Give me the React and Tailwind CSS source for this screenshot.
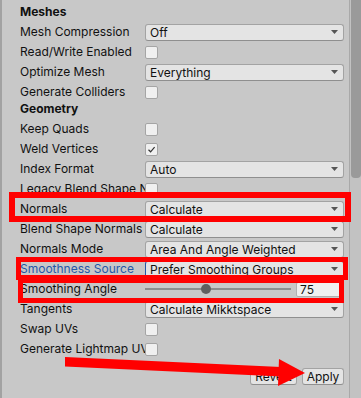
import React from 'react';

const Caret = () => (
  <svg width="7" height="4" viewBox="0 0 7 4" className="shrink-0">
    <path d="M0 0 H7 L3.5 4 Z" fill="#555" />
  </svg>
);

const Dropdown = ({ value, accent }) => (
  <div
    className={`flex-1 h-[17px] flex items-center justify-between pl-[4px] pr-[5px] rounded-[3px] border border-[#a3a3a3] border-b-[#8f8f8f] bg-[#e4e4e4] ${
      accent ? 'border-l-[#2457a8]' : ''
    }`}
  >
    <span className="leading-[15px] whitespace-nowrap">{value}</span>
    <Caret />
  </div>
);

const Checkbox = ({ checked }) => (
  <div className="w-[13px] h-[13px] rounded-[2px] border border-[#a5a5a5] bg-[#f0f0f0] flex items-center justify-center">
    {checked && (
      <svg width="9" height="9" viewBox="0 0 9 9">
        <path d="M1.5 4.8 L3.6 6.8 L7.6 2.2" fill="none" stroke="#333" strokeWidth="1.2" />
      </svg>
    )}
  </div>
);

const Row = ({ label, blue, children }) => (
  <div className="flex items-center h-5">
    <div
      className={`w-[125px] pr-[2px] overflow-hidden whitespace-nowrap leading-[16px] ${
        blue ? 'text-[#2457a8]' : ''
      }`}
    >
      {label}
    </div>
    {children}
  </div>
);

const Header = ({ title }) => (
  <div className="h-[17px] font-bold leading-[14px]">{title}</div>
);

const App = () => {
  return (
    <div className="relative w-[361px] h-[398px] overflow-hidden flex bg-[#c8c8c8] text-[12px] text-[#111] font-['Inter',sans-serif]">
      <div className="w-[2px] bg-[#a2a2a2]" />

      <div className="flex-1 pl-[18px] pr-[5px] pt-[5px] flex flex-col">
        <Header title="Meshes" />
        <Row label="Mesh Compression"><Dropdown value="Off" /></Row>
        <Row label="Read/Write Enabled"><Checkbox /></Row>
        <Row label="Optimize Mesh"><Dropdown value="Everything" /></Row>
        <Row label="Generate Colliders"><Checkbox /></Row>
        <Header title="Geometry" />
        <Row label="Keep Quads"><Checkbox /></Row>
        <Row label="Weld Vertices"><Checkbox checked /></Row>
        <Row label="Index Format"><Dropdown value="Auto" /></Row>
        <Row label="Legacy Blend Shape Normals"><Checkbox /></Row>
        <Row label="Normals"><Dropdown value="Calculate" /></Row>
        <Row label="Blend Shape Normals"><Dropdown value="Calculate" /></Row>
        <Row label="Normals Mode"><Dropdown value="Area And Angle Weighted" /></Row>
        <Row label="Smoothness Source" blue>
          <Dropdown value="Prefer Smoothing Groups" accent />
        </Row>
        <Row label="Smoothing Angle">
          <div className="flex-1 flex items-center">
            <div className="relative w-[146px] h-[10px] flex items-center">
              <div className="w-full h-[2px] bg-[#8c8c8c]" />
              <div className="absolute left-[56px] top-0 w-[10px] h-[10px] rounded-full bg-[#5f5f5f]" />
            </div>
            <div className="ml-[5px] flex-1 h-[15px] flex items-center pl-[3px] rounded-[2px] border border-[#b0b0b0] bg-[#f0f0f0] leading-[13px]">
              75
            </div>
          </div>
        </Row>
        <Row label="Tangents"><Dropdown value="Calculate Mikktspace" /></Row>
        <Row label="Swap UVs"><Checkbox /></Row>
        <Row label="Generate Lightmap UVs"><Checkbox /></Row>

        <div className="mt-[9px] flex justify-end gap-[5px]">
          <button className="w-[47px] h-[17px] rounded-[3px] border border-[#a3a3a3] border-b-[#8f8f8f] bg-[#e4e4e4] leading-[15px]">
            Revert
          </button>
          <button className="w-[42px] h-[17px] rounded-[3px] border border-[#a3a3a3] border-b-[#8f8f8f] bg-[#e4e4e4] leading-[15px]">
            Apply
          </button>
        </div>
      </div>

      <div className="w-[12px] border-l border-[#a9a9a9] bg-[#c2c2c2] pl-[1px]">
        <div className="w-[10px] h-[178px] rounded-b-[4px] bg-[#9a9a9a]" />
      </div>

      {/* annotation boxes */}
      <div className="absolute left-[9px] top-[192px] w-[342px] h-[30px] border-[6px] border-[#ff0000] pointer-events-none" />
      <div className="absolute left-[16px] top-[257px] w-[332px] h-[23px] border-[5px] border-[#ff0000] pointer-events-none" />
      <div className="absolute left-[18px] top-[278px] w-[326px] h-[25px] border-[5px] border-[#ff0000] pointer-events-none" />

      {/* annotation arrow */}
      <svg className="absolute left-0 top-0 pointer-events-none" width="361" height="398" viewBox="0 0 361 398">
        <polygon points="65,357 281,367 281,376.5 65,366.5" fill="#ff0000" />
        <polygon points="279,359 305,373 278,386" fill="#ff0000" />
      </svg>
    </div>
  );
};

export default App;
